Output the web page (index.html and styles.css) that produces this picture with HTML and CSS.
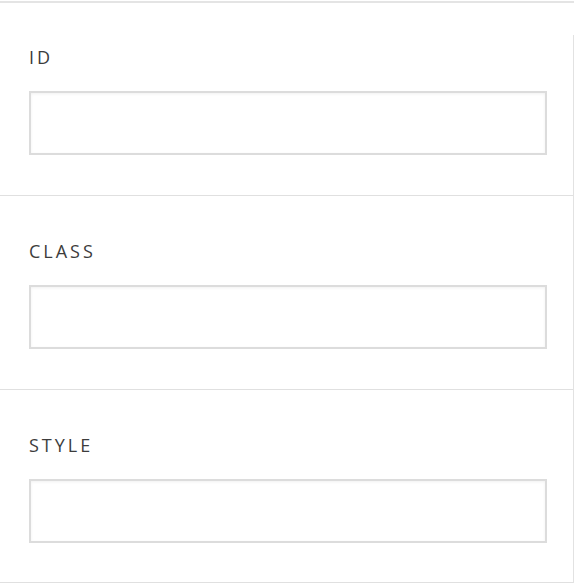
FILE: index.html
```html
<!DOCTYPE html>
<html>
<head>
<meta charset="utf-8">
<link rel="stylesheet" href="styles.css">
</head>
<body>
<div class="panel">
  <div class="field field-first">
    <label class="label" for="f-id">ID</label>
    <input class="input" id="f-id" type="text">
  </div>
  <div class="field">
    <label class="label" for="f-class">CLASS</label>
    <input class="input" id="f-class" type="text">
  </div>
  <div class="field field-last">
    <label class="label" for="f-style">STYLE</label>
    <input class="input" id="f-style" type="text">
  </div>
</div>
</body>
</html>
```
FILE: styles.css
```css
html, body {
  margin: 0;
  padding: 0;
  background: #fff;
}
body {
  padding-top: 1px;
  font-family: "Open Sans", "Liberation Sans", sans-serif;
}
.panel {
  position: relative;
  width: 574px;
}
.panel::after {
  content: "";
  position: absolute;
  right: 0;
  top: 34px;
  bottom: 0;
  width: 1px;
  background: #e2e2e2;
}
.field {
  display: flex;
  flex-direction: column;
  align-items: flex-start;
  border-top: 1px solid #e0e0e0;
  padding: 43px 27px 40px 29px;
}
.field-first {
  border-top: 2px solid #e4e4e4;
  padding-top: 42px;
}
.field-last {
  padding-bottom: 39px;
  border-bottom: 1px solid #e0e0e0;
}
.label {
  font-size: 18px;
  font-weight: 500;
  line-height: 24px;
  letter-spacing: 3px;
  color: #3c3c3c;
  margin-bottom: 22px;
}
.input {
  box-sizing: border-box;
  width: 518px;
  height: 64px;
  margin: 0;
  border: 2px solid #dcdcdc;
  background: #fff;
  box-shadow: inset 0 1px 3px rgba(0, 0, 0, 0.06);
  outline: none;
  padding: 0 12px;
  font: inherit;
}
```
